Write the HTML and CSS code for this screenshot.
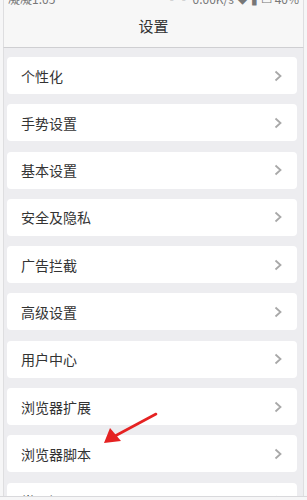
FILE: index.html
```html
<!DOCTYPE html>
<html lang="zh">
<head>
<meta charset="utf-8">
<link rel="stylesheet" href="styles.css">
</head>
<body>
<div class="phone">
  <div class="header">
    <div class="status">
      <span class="status-text">凝凝1:05</span>
      <span class="status-text">▪▪ 0.00K/s ◆ ▮ ▭ 40%</span>
    </div>
    <div class="title">设置</div>
  </div>
  <div class="list">
    <div class="item"><span class="label">个性化</span><svg class="chev" viewBox="0 0 8 12"><path d="M1.5 1.5 L6.5 6 L1.5 10.5"/></svg></div>
    <div class="item"><span class="label">手势设置</span><svg class="chev" viewBox="0 0 8 12"><path d="M1.5 1.5 L6.5 6 L1.5 10.5"/></svg></div>
    <div class="item"><span class="label">基本设置</span><svg class="chev" viewBox="0 0 8 12"><path d="M1.5 1.5 L6.5 6 L1.5 10.5"/></svg></div>
    <div class="item"><span class="label">安全及隐私</span><svg class="chev" viewBox="0 0 8 12"><path d="M1.5 1.5 L6.5 6 L1.5 10.5"/></svg></div>
    <div class="item"><span class="label">广告拦截</span><svg class="chev" viewBox="0 0 8 12"><path d="M1.5 1.5 L6.5 6 L1.5 10.5"/></svg></div>
    <div class="item"><span class="label">高级设置</span><svg class="chev" viewBox="0 0 8 12"><path d="M1.5 1.5 L6.5 6 L1.5 10.5"/></svg></div>
    <div class="item"><span class="label">用户中心</span><svg class="chev" viewBox="0 0 8 12"><path d="M1.5 1.5 L6.5 6 L1.5 10.5"/></svg></div>
    <div class="item"><span class="label">浏览器扩展</span><svg class="chev" viewBox="0 0 8 12"><path d="M1.5 1.5 L6.5 6 L1.5 10.5"/></svg></div>
    <div class="item"><span class="label">浏览器脚本</span><svg class="chev" viewBox="0 0 8 12"><path d="M1.5 1.5 L6.5 6 L1.5 10.5"/></svg></div>
    <div class="item"><span class="label">常见问题</span><svg class="chev" viewBox="0 0 8 12"><path d="M1.5 1.5 L6.5 6 L1.5 10.5"/></svg></div>
  </div>
  <svg class="arrow" width="307" height="500" viewBox="0 0 307 500">
    <line x1="156" y1="414" x2="115" y2="436" stroke="#e52222" stroke-width="2.6" stroke-linecap="round"/>
    <polygon points="104,443 110,428 121,441" fill="#e52222"/>
  </svg>
</div>
</body>
</html>
```

FILE: styles.css
```css
* { box-sizing: border-box; }
html, body { margin: 0; padding: 0; }
body {
  width: 307px;
  height: 500px;
  overflow: hidden;
  background: #f6f6f7;
  font-family: "Noto Sans CJK SC", "Liberation Sans", sans-serif;
}
.phone {
  position: relative;
  width: 307px;
  height: 497px;
  margin: 0;
  padding: 0 3px;
  background: #f6f6f7;
  border-bottom: 1px solid #d9d9dc;
  overflow: hidden;
}
.header {
  background: #f7f7f7;
  border-left: 1px solid #dedee0;
  border-right: 1px solid #dedee0;
  border-bottom: 1px solid #cfcfd2;
  height: 48px;
}
.status {
  height: 6px;
  overflow: hidden;
  display: flex;
  justify-content: space-between;
  padding: 0 4px;
}
.status-text {
  font-size: 12px;
  line-height: 12px;
  margin-top: -7px;
  color: #777;
}
.title {
  text-align: center;
  font-size: 15px;
  line-height: 20px;
  margin-top: 10px;
  color: #333;
}
.list {
  background: #ededf0;
  border-left: 1px solid #dedee0;
  border-right: 1px solid #dedee0;
  height: 452px;
  padding: 9px 6px 0 3px;
  display: flex;
  flex-direction: column;
  gap: 10.3px;
}
.item {
  flex: none;
  height: 37px;
  background: #ffffff;
  border-radius: 4px;
  display: flex;
  align-items: center;
  justify-content: space-between;
  padding: 0 15px 0 14px;
}
.label {
  font-size: 14px;
  color: #333;
  line-height: 20px;
}
.chev {
  width: 8px;
  height: 12px;
  fill: none;
  stroke: #a8a8a8;
  stroke-width: 1.8;
}
.arrow {
  position: absolute;
  left: 0;
  top: 0;
  pointer-events: none;
}
```
